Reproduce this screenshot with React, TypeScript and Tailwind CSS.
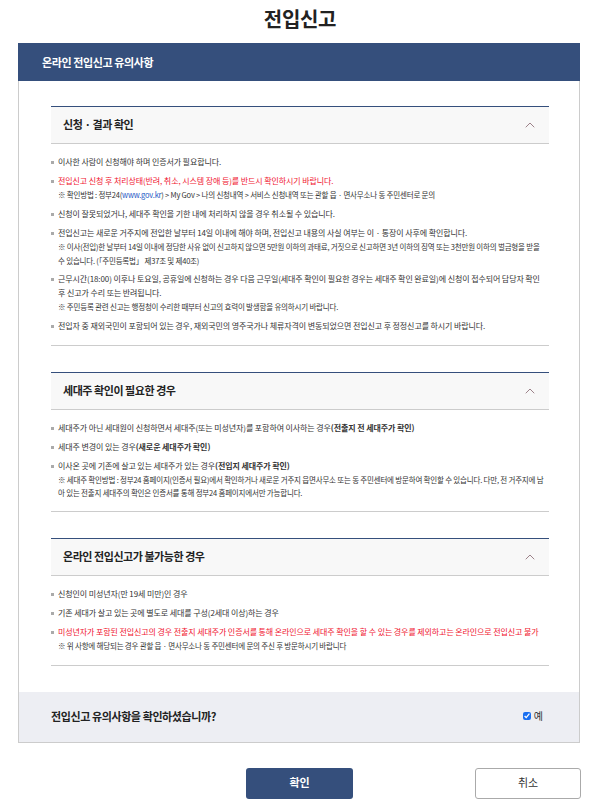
/**
 * App - 전입신고 온라인 유의사항 안내 화면.
 */
import { ChevronUp } from "lucide-react";
import type { ReactNode } from "react";

const FONT = "font-['Noto_Sans_CJK_KR','Noto_Sans',sans-serif]";

function Section({ title, children }: { title: string; children: ReactNode }) {
    return (
        <section className="border-b border-[#ccc]">
            <div className="flex h-[38px] items-center justify-between border-t border-b border-t-[#354f7c] border-b-[#ccc] bg-[#f8f8f8] pr-[11px] pl-[12px]">
                <h3 className="-mt-[2px] text-[11px] font-bold tracking-[-0.45px] text-[#222]">{title}</h3>
                <ChevronUp className="size-[16px] text-[#7a5560]" strokeWidth={1.1} />
            </div>
            <ul className="flex flex-col gap-[5px] pt-[11px] pb-[12px]">{children}</ul>
        </section>
    );
}

function Item({ children, red, sub }: { children: ReactNode; red?: boolean; sub?: ReactNode }) {
    return (
        <li className="flex text-[8px] leading-[14px] tracking-[-0.1px]">
            <span className="mt-[6px] mr-[4px] size-[3px] shrink-0 bg-[#aaa]" />
            <div className="min-w-0">
                <p className={red ? "text-[#f0142f]" : "text-[#333]"}>{children}</p>
                {sub}
            </div>
        </li>
    );
}

function Sub({ children, tight }: { children: ReactNode; tight?: boolean }) {
    return (
        <p className={`text-[7.5px] tracking-[-0.2px] text-[#333] ${tight ? "leading-[13px]" : "leading-[13.75px]"}`}>
            {children}
        </p>
    );
}

export default function App() {
    return (
        <div className={`${FONT} h-[807px] w-[598px] overflow-hidden bg-white`}>
            <h1 className="pt-[4px] pl-[2px] text-center text-[20px] leading-[30px] font-bold tracking-[-0.3px] text-[#222]">전입신고</h1>

            <div className="mx-[18px] mt-[9px] border-x border-b border-[#ccc]">
                <div className="-mx-px flex h-[38px] items-center bg-[#354f7c] pl-[24px] text-[11px] font-bold tracking-[-0.4px] text-white">
                    온라인 전입신고 유의사항
                </div>

                <div className="flex flex-col gap-[26px] pt-[25px] pr-[30px] pb-[26px] pl-[32px]">
                    <Section title="신청 · 결과 확인">
                        <Item>이사한 사람이 신청해야 하며 인증서가 필요합니다.</Item>
                        <Item
                            red
                            sub={
                                <Sub>
                                    ※ 확인방법 : 정부24(<span className="text-[#1a56c4]">www.gov.kr</span>) &gt; My Gov &gt; 나의 신청내역 &gt; 서비스 신청내역 또는 관할 읍 · 면사무소나 동 주민센터로 문의
                                </Sub>
                            }
                        >
                            전입신고 신청 후 처리상태(반려, 취소, 시스템 장애 등)를 반드시 확인하시기 바랍니다.
                        </Item>
                        <Item>신청이 잘못되었거나, 세대주 확인을 기한 내에 처리하지 않을 경우 취소될 수 있습니다.</Item>
                        <Item
                            sub={
                                <Sub>
                                    ※ 이사(전입)한 날부터 14일 이내에 정당한 사유 없이 신고하지 않으면 5만원 이하의 과태료, 거짓으로 신고하면 3년 이하의 징역 또는 3천만원 이하의 벌금형을 받을
                                    <br />수 있습니다. (「주민등록법」 제37조 및 제40조)
                                </Sub>
                            }
                        >
                            전입신고는 새로운 거주지에 전입한 날부터 14일 이내에 해야 하며, 전입신고 내용의 사실 여부는 이 · 통장이 사후에 확인합니다.
                        </Item>
                        <Item sub={<Sub>※ 주민등록 관련 신고는 행정청이 수리한 때부터 신고의 효력이 발생함을 유의하시기 바랍니다.</Sub>}>
                            근무시간(18:00) 이후나 토요일, 공휴일에 신청하는 경우 다음 근무일(세대주 확인이 필요한 경우는 세대주 확인 완료일)에 신청이 접수되어 담당자 확인
                            <br />후 신고가 수리 또는 반려됩니다.
                        </Item>
                        <Item>전입자 중 재외국민이 포함되어 있는 경우, 재외국민의 영주국가나 체류자격이 변동되었으면 전입신고 후 정정신고를 하시기 바랍니다.</Item>
                    </Section>

                    <Section title="세대주 확인이 필요한 경우">
                        <Item>
                            세대주가 아닌 세대원이 신청하면서 세대주(또는 미성년자)를 포함하여 이사하는 경우<b>(전출지 전 세대주가 확인)</b>
                        </Item>
                        <Item>
                            세대주 변경이 있는 경우<b>(새로운 세대주가 확인)</b>
                        </Item>
                        <Item
                            sub={
                                <Sub tight>
                                    ※ 세대주 확인방법 : 정부24 홈페이지(인증서 필요)에서 확인하거나 새로운 거주지 읍면사무소 또는 동 주민센터에 방문하여 확인할 수 있습니다. 다만, 전 거주지에 남
                                    <br />아 있는 전출지 세대주의 확인은 인증서를 통해 정부24 홈페이지에서만 가능합니다.
                                </Sub>
                            }
                        >
                            이사온 곳에 기존에 살고 있는 세대주가 있는 경우<b>(전입지 세대주가 확인)</b>
                        </Item>
                    </Section>

                    <Section title="온라인 전입신고가 불가능한 경우">
                        <Item>신청인이 미성년자(만 19세 미만)인 경우</Item>
                        <Item>기존 세대가 살고 있는 곳에 별도로 세대를 구성(2세대 이상)하는 경우</Item>
                        <Item red sub={<Sub>※ 위 사항에 해당되는 경우 관할 읍 · 면사무소나 동 주민센터에 문의 주신 후 방문하시기 바랍니다</Sub>}>
                            미성년자가 포함된 전입신고의 경우 전출지 세대주가 인증서를 통해 온라인으로 세대주 확인을 할 수 있는 경우를 제외하고는 온라인으로 전입신고 불가
                        </Item>
                    </Section>
                </div>

                <div className="flex h-[50px] items-center justify-between bg-[#edeef3] pr-[36px] pl-[32px]">
                    <p className="-mt-[2px] text-[11px] font-bold tracking-[-0.4px] text-[#222]">전입신고 유의사항을 확인하셨습니까?</p>
                    <label className="-mt-[2px] flex items-center gap-[3px] text-[10px] text-[#333]">
                        <input type="checkbox" defaultChecked className="size-[8px] accent-[#1a6ff0]" />예
                    </label>
                </div>
            </div>

            <div className="mt-[25px] flex pr-[17px] pl-[246px]">
                <button className="h-[31px] w-[107px] rounded-[3px] bg-[#354f7c] pb-[2px] text-[11px] font-bold text-white">확인</button>
                <button className="ml-auto h-[31px] w-[106px] rounded-[3px] border border-[#aaa] bg-white pb-[2px] text-[11px] text-[#333]">취소</button>
            </div>
        </div>
    );
}
